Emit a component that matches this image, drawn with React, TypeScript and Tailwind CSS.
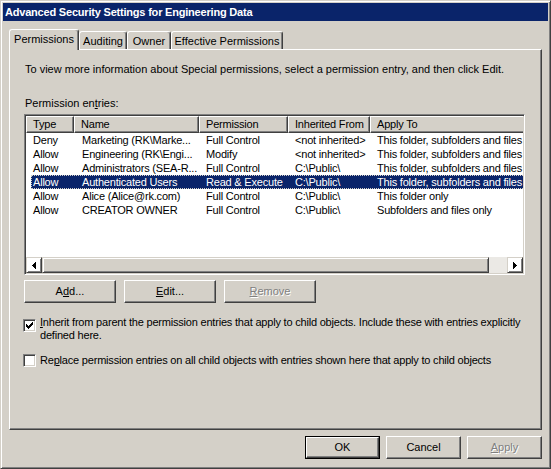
import type { ReactNode } from "react";

const btnRaised =
  "border border-t-white border-l-white border-r-[#404040] border-b-[#404040] shadow-[inset_-1px_-1px_#808080]";
const sbRaised =
  "border border-t-[#d4d0c8] border-l-[#d4d0c8] border-r-[#404040] border-b-[#404040] shadow-[inset_1px_1px_#fff,inset_-1px_-1px_#808080]";
const sunken =
  "border border-t-[#808080] border-l-[#808080] border-r-white border-b-white shadow-[inset_1px_1px_#404040,inset_-1px_-1px_#d4d0c8]";

const rows = [
  ["Deny", "Marketing (RK\\Marke...", "Full Control", "<not inherited>", "This folder, subfolders and files"],
  ["Allow", "Engineering (RK\\Engi...", "Modify", "<not inherited>", "This folder, subfolders and files"],
  ["Allow", "Administrators (SEA-R...", "Full Control", "C:\\Public\\", "This folder, subfolders and files"],
  ["Allow", "Authenticated Users", "Read & Execute", "C:\\Public\\", "This folder, subfolders and files"],
  ["Allow", "Alice (Alice@rk.com)", "Full Control", "C:\\Public\\", "This folder only"],
  ["Allow", "CREATOR OWNER", "Full Control", "C:\\Public\\", "Subfolders and files only"],
];

const cols = [
  { label: "Type", w: "w-[48px]" },
  { label: "Name", w: "w-[125px]" },
  { label: "Permission", w: "w-[89px]" },
  { label: "Inherited From", w: "w-[82px]" },
  { label: "Apply To", w: "w-[200px]" },
];

function Button({
  children,
  w = "w-[75px]",
  disabled,
  isDefault,
}: {
  children: ReactNode;
  w?: string;
  disabled?: boolean;
  isDefault?: boolean;
}) {
  const face = (
    <div
      className={`flex h-full w-full items-center justify-center ${btnRaised} ${
        disabled ? "text-[#808080] [text-shadow:1px_1px_0_#fff]" : ""
      }`}
    >
      {children}
    </div>
  );
  return (
    <div className={`h-[23px] shrink-0 ${w} ${isDefault ? "border border-black" : ""}`}>{face}</div>
  );
}

function Arrow({ dir }: { dir: "left" | "right" }) {
  const cells = [
    [3, 3, 1],
    [2, 4, 3],
    [1, 5, 5],
    [0, 6, 7],
  ];
  return (
    <svg width="4" height="7" viewBox="0 0 4 7" shapeRendering="crispEdges">
      {cells.map(([y0], i) => {
        const x = dir === "left" ? i : 3 - i;
        return <rect key={i} x={x} y={y0} width="1" height={cells[i][2]} fill="#000" />;
      })}
    </svg>
  );
}

function CheckBox({ checked }: { checked?: boolean }) {
  const px = [
    [6, 0], [5, 1], [6, 1], [0, 2], [4, 2], [5, 2], [6, 2],
    [0, 3], [1, 3], [3, 3], [4, 3], [5, 3],
    [0, 4], [1, 4], [2, 4], [3, 4], [4, 4],
    [1, 5], [2, 5], [3, 5], [2, 6],
  ];
  return (
    <div className={`h-[13px] w-[13px] shrink-0 bg-white p-[1px] ${sunken}`}>
      {checked && (
        <svg width="9" height="9" viewBox="-1 -1 9 9" shapeRendering="crispEdges" className="block">
          {px.map(([x, y], i) => (
            <rect key={i} x={x} y={y} width="1" height="1" fill="#000" />
          ))}
        </svg>
      )}
    </div>
  );
}

export default function App() {
  return (
    <div className="flex h-[469px] w-[551px] flex-col overflow-hidden border border-t-[#d4d0c8] border-l-[#d4d0c8] border-r-[#404040] border-b-[#404040] bg-[#d4d0c8] p-[2px] font-['Liberation_Sans',Arial,sans-serif] text-[11px] leading-[13px] text-black shadow-[inset_1px_1px_#fff,inset_-1px_-1px_#808080]">
      <div className="flex h-[18px] shrink-0 items-center bg-[#0a246a] pl-[2px] font-bold tracking-[-0.2px] text-white">
        Advanced Security Settings for Engineering Data
      </div>

      <div className="flex flex-col px-[6px]">
        <div className="relative z-10 mt-[8px] flex h-[20px] items-end">
          <div className="-mb-[1px] flex h-[21px] w-[70px] items-center justify-center rounded-t-[3px] border border-b-0 border-t-white border-l-white border-r-[#404040] bg-[#d4d0c8] pb-[1px] shadow-[inset_-1px_0_#808080]">
            Permissions
          </div>
          {[
            ["Auditing", "w-[48px]"],
            ["Owner", "w-[44px]"],
            ["Effective Permissions", "w-[112px]"],
          ].map(([t, w]) => (
            <div
              key={t}
              className={`flex h-[18px] ${w} items-center justify-center whitespace-nowrap rounded-t-[3px] border border-b-0 border-t-white border-l-white border-r-[#404040] pt-[1px] shadow-[inset_-1px_0_#808080]`}
            >
              {t}
            </div>
          ))}
        </div>

        <div className="flex h-[381px] flex-col border border-t-white border-l-white border-r-[#404040] border-b-[#404040] pl-[14px] pr-[15px] pt-[13px] shadow-[inset_-1px_-1px_#808080]">
          <p className="ml-[1px] whitespace-nowrap">
            To view more information about Special permissions, select a permission entry, and then click Edit.
          </p>
          <p className="ml-[1px] mt-[21px]">
            Permission en<u>t</u>ries:
          </p>

          <div
            className={`mt-[4px] flex h-[161px] w-[501px] flex-col bg-white p-[1px] tracking-[-0.2px] ${sunken}`}
          >
            <div className="flex h-[17px] shrink-0 overflow-hidden bg-[#d4d0c8]">
              {cols.map((c) => (
                <div
                  key={c.label}
                  className={`flex shrink-0 items-center whitespace-nowrap border border-t-white border-l-white border-r-[#404040] border-b-[#404040] pl-[6px] shadow-[inset_-1px_-1px_#808080] ${c.w}`}
                >
                  {c.label}
                </div>
              ))}
            </div>

            <div className="flex flex-1 flex-col overflow-hidden">
              {rows.map((r, i) => {
                const sel = i === 3;
                return (
                  <div key={i} className="flex h-[14px] shrink-0">
                    <div className="w-[5px] shrink-0" />
                    <div
                      className={`flex w-[600px] shrink-0 items-center whitespace-nowrap ${
                        sel ? "border border-dotted border-[#d4d0c8] bg-[#0a246a] text-white" : "border border-transparent"
                      }`}
                    >
                      <span className="w-[42px] shrink-0 overflow-hidden pl-[1px]">{r[0]}</span>
                      <span className="w-[125px] shrink-0 overflow-hidden pl-[8px]">{r[1]}</span>
                      <span className="w-[89px] shrink-0 overflow-hidden pl-[7px]">{r[2]}</span>
                      <span className="w-[82px] shrink-0 overflow-hidden pl-[7px]">{r[3]}</span>
                      <span className="w-[200px] shrink-0 overflow-hidden pl-[7px]">{r[4]}</span>
                    </div>
                  </div>
                );
              })}
            </div>

            <div className="flex h-[16px] shrink-0">
              <div className={`flex w-[16px] shrink-0 items-center justify-center ${sbRaised}`}>
                <Arrow dir="left" />
              </div>
              <div className={`w-[447px] shrink-0 bg-[#d4d0c8] ${sbRaised}`} />
              <div className="flex-1 bg-[#ebe9e5]" />
              <div className={`flex w-[16px] shrink-0 items-center justify-center ${sbRaised}`}>
                <Arrow dir="right" />
              </div>
            </div>
          </div>

          <div className="mt-[5px] flex gap-[8px]">
            <Button w="w-[92px]">
              A<u>d</u>d...
            </Button>
            <Button w="w-[92px]">
              <u>E</u>dit...
            </Button>
            <Button w="w-[92px]" disabled>
              <u>R</u>emove
            </Button>
          </div>

          <div className="-ml-[1px] mt-[13px] flex gap-[4px] tracking-[-0.2px]">
            <div className="mt-[3px]">
              <CheckBox checked />
            </div>
            <p className="w-[484px]">
              <u>I</u>nherit from parent the permission entries that apply to child objects. Include these with entries
              explicitly defined here.
            </p>
          </div>

          <div className="-ml-[1px] mt-[12px] flex items-center gap-[4px] tracking-[-0.2px]">
            <CheckBox />
            <p className="whitespace-nowrap">
              Re<u>p</u>lace permission entries on all child objects with entries shown here that apply to child
              objects
            </p>
          </div>
        </div>

        <div className="mt-[6px] flex justify-end gap-[6px]">
          <Button isDefault>OK</Button>
          <Button>Cancel</Button>
          <Button disabled>
            <u>A</u>pply
          </Button>
        </div>
      </div>
    </div>
  );
}
